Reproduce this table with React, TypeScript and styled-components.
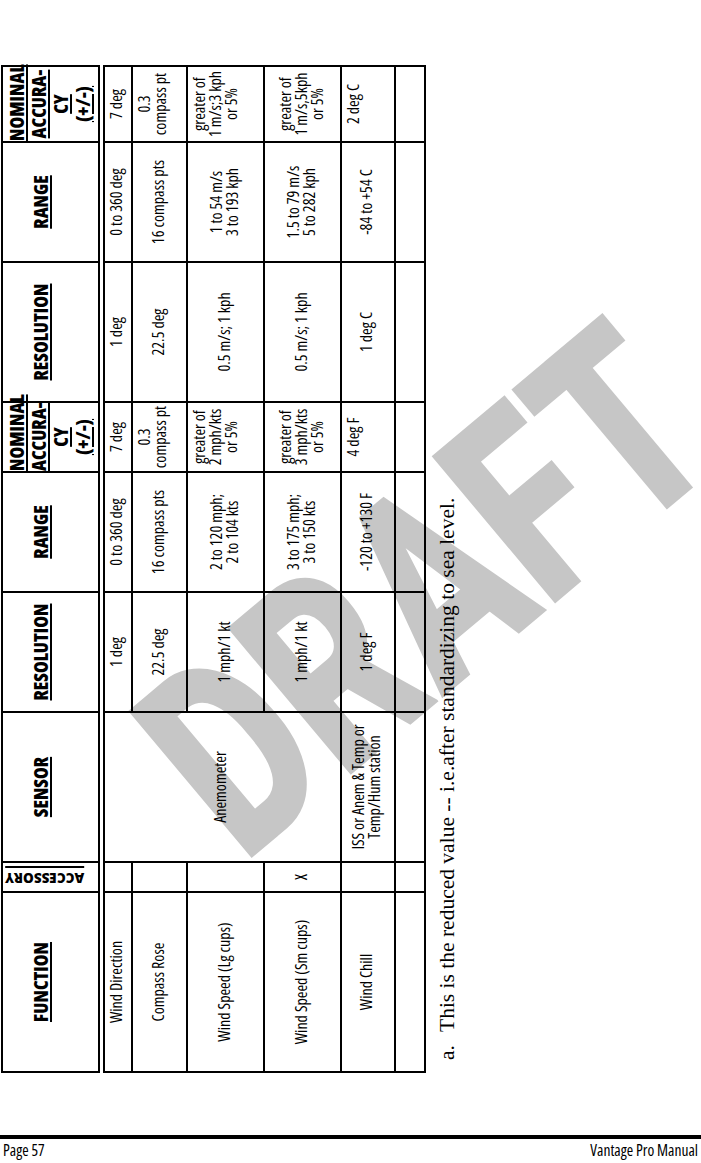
import React from 'react';
import styled, { createGlobalStyle } from 'styled-components';

const GlobalStyle = createGlobalStyle`
  html, body {
    margin: 0;
    padding: 0;
    background: #fff;
  }
`;

const SANS = `"Open Sans", "DejaVu Sans Condensed", sans-serif`;

const Page = styled.div`
  position: relative;
  width: 701px;
  height: 1163px;
  overflow: hidden;
  font-family: ${SANS};
  font-stretch: 80%;
  color: #000;
`;

const Watermark = styled.div`
  position: absolute;
  left: 427px;
  top: 591px;
  transform: translate(-50%, -50%) rotate(-40deg) scaleY(1.35);
  font-family: Roboto, "DejaVu Sans", sans-serif;
  font-weight: 900;
  font-stretch: 100%;
  font-size: 200px;
  line-height: 1;
  color: #c6c6c6;
  white-space: nowrap;
  z-index: 0;
  user-select: none;
`;

const Content = styled.div`
  position: relative;
  z-index: 1;
  padding: 67px 0 0 1px;
`;

// the sheet is laid out in landscape and turned a quarter to the left
const SheetFrame = styled.div`
  width: 480px;
  height: 1006px;
`;

const Sheet = styled.div`
  width: 1006px;
  transform-origin: top left;
  transform: translateY(1006px) rotate(-90deg);
`;

const Table = styled.table`
  width: 1006px;
  table-layout: fixed;
  border-collapse: collapse;
  font-size: 16px;
  font-weight: 500;
  line-height: 16px;
`;

const Row = styled.tr<{ $h: number }>`
  height: ${p => p.$h}px;
`;

const HeadCell = styled.th<{ $stack?: boolean }>`
  border: 2px solid #000;
  border-bottom: 7px double #000;
  vertical-align: top;
  padding: ${p => (p.$stack ? '3px 0 0' : '27px 2px 0')};
  font-size: 19px;
  font-stretch: 85%;
  font-weight: 800;
  line-height: 22px;
  text-align: center;
  white-space: nowrap;
`;

const HeadText = styled.span`
  text-decoration: underline;
  text-decoration-thickness: 2px;
  text-underline-offset: 2px;
`;

const SideText = styled.span`
  display: inline-block;
  writing-mode: vertical-rl;
  transform: rotate(180deg);
  border-left: 2px solid #000;
  padding-left: 1px;
  font-size: 13.5px;
  font-stretch: 100%;
  line-height: 18px;
  margin-top: -1px;
`;

const Cell = styled.td<{ $top?: boolean }>`
  border: 2px solid #000;
  padding: ${p => (p.$top ? '3px 1px 0' : '0 1px 4px')};
  vertical-align: ${p => (p.$top ? 'top' : 'middle')};
  text-align: center;
  white-space: nowrap;
`;

const Footnote = styled.p`
  margin: 7px 0 0 13px;
  font-family: "Liberation Serif", "Times New Roman", serif;
  font-stretch: 100%;
  font-size: 21.5px;
  line-height: 28px;
  white-space: nowrap;
`;

const NoteMark = styled.span`
  display: inline-block;
  width: 28px;
`;

const Footer = styled.footer`
  margin-top: 62px;
  border-top: 4px solid #000;
  display: flex;
  justify-content: space-between;
  padding: 2px 3px 0 3px;
  font-size: 15.5px;
  font-weight: 500;
  font-stretch: 75%;
  line-height: 18px;
`;

type Line = string[];
type RowData = {
  h: number;
  fn: Line;
  acc: string;
  sensor?: Line;
  sensorSpan?: number;
  cells: { t: Line; top?: boolean }[];
};

const cols = [180, 30, 150, 120, 120, 70, 140, 120, 76];

const rows: RowData[] = [
  {
    h: 31,
    fn: ['Wind Direction'],
    acc: '',
    sensor: ['Anemometer'],
    sensorSpan: 4,
    cells: [
      { t: ['1 deg'] },
      { t: ['0 to 360 deg'] },
      { t: ['7 deg'], top: true },
      { t: ['1 deg'] },
      { t: ['0 to 360 deg'] },
      { t: ['7 deg'], top: true },
    ],
  },
  {
    h: 55,
    fn: ['Compass Rose'],
    acc: '',
    cells: [
      { t: ['22.5 deg'] },
      { t: ['16 compass pts'] },
      { t: ['0.3', 'compass pt'], top: true },
      { t: ['22.5 deg'] },
      { t: ['16 compass pts'] },
      { t: ['0.3', 'compass pt'], top: true },
    ],
  },
  {
    h: 77,
    fn: ['Wind Speed (Lg cups)'],
    acc: '',
    cells: [
      { t: ['1 mph/1 kt'] },
      { t: ['2 to 120 mph;', '2 to 104 kts'] },
      { t: ['greater of', '2 mph/kts', 'or 5%'], top: true },
      { t: ['0.5 m/s; 1 kph'] },
      { t: ['1 to 54 m/s', '3 to 193 kph'] },
      { t: ['greater of', '1 m/s;3 kph', 'or 5%'], top: true },
    ],
  },
  {
    h: 77,
    fn: ['Wind Speed (Sm cups)'],
    acc: 'X',
    cells: [
      { t: ['1 mph/1 kt'] },
      { t: ['3 to 175 mph;', '3 to 150 kts'] },
      { t: ['greater of', '3 mph/kts', 'or 5%'] },
      { t: ['0.5 m/s; 1 kph'] },
      { t: ['1.5 to 79 m/s', '5 to 282 kph'] },
      { t: ['greater of', '1 m/s,5kph', 'or 5%'] },
    ],
  },
  {
    h: 54,
    fn: ['Wind Chill'],
    acc: '',
    sensor: ['ISS or Anem & Temp or', 'Temp/Hum station'],
    cells: [
      { t: ['1 deg F'] },
      { t: ['-120 to +130 F'] },
      { t: ['4 deg F'], top: true },
      { t: ['1 deg C'] },
      { t: ['-84 to +54 C'] },
      { t: ['2 deg C'], top: true },
    ],
  },
  {
    h: 30,
    fn: [],
    acc: '',
    sensor: [],
    cells: [{ t: [] }, { t: [] }, { t: [] }, { t: [] }, { t: [] }, { t: [] }],
  },
];

const Lines: React.FC<{ lines: Line }> = ({ lines }) => (
  <>
    {lines.map((l, i) => (
      <React.Fragment key={i}>
        {i > 0 && <br />}
        {l}
      </React.Fragment>
    ))}
  </>
);

const Nominal = () => (
  <HeadCell $stack>
    <HeadText>
      NOMINAL
      <br />
      ACCURA-
      <br />
      CY
      <br />
      (+/-)
    </HeadText>
  </HeadCell>
);

const App: React.FC = () => (
  <Page>
    <GlobalStyle />
    <Watermark>DRAFT</Watermark>
    <Content>
      <SheetFrame>
        <Sheet>
          <Table>
            <colgroup>
              {cols.map((w, i) => (
                <col key={i} style={{ width: w }} />
              ))}
            </colgroup>
            <thead>
              <Row $h={99}>
                <HeadCell><HeadText>FUNCTION</HeadText></HeadCell>
                <HeadCell $stack><SideText>ACCESSORY</SideText></HeadCell>
                <HeadCell><HeadText>SENSOR</HeadText></HeadCell>
                <HeadCell><HeadText>RESOLUTION</HeadText></HeadCell>
                <HeadCell><HeadText>RANGE</HeadText></HeadCell>
                <Nominal />
                <HeadCell><HeadText>RESOLUTION</HeadText></HeadCell>
                <HeadCell><HeadText>RANGE</HeadText></HeadCell>
                <Nominal />
              </Row>
            </thead>
            <tbody>
              {rows.map((r, i) => (
                <Row key={i} $h={r.h}>
                  <Cell><Lines lines={r.fn} /></Cell>
                  <Cell>{r.acc}</Cell>
                  {r.sensor && (
                    <Cell rowSpan={r.sensorSpan ?? 1}>
                      <Lines lines={r.sensor} />
                    </Cell>
                  )}
                  {r.cells.map((c, j) => (
                    <Cell key={j} $top={c.top}>
                      <Lines lines={c.t} />
                    </Cell>
                  ))}
                </Row>
              ))}
            </tbody>
          </Table>
          <Footnote>
            <NoteMark>a.</NoteMark>This is the reduced value -- i.e.after standardizing to sea level.
          </Footnote>
        </Sheet>
      </SheetFrame>
    </Content>
    <Footer>
      <span>Page 57</span>
      <span>Vantage Pro Manual</span>
    </Footer>
  </Page>
);

export default App;
